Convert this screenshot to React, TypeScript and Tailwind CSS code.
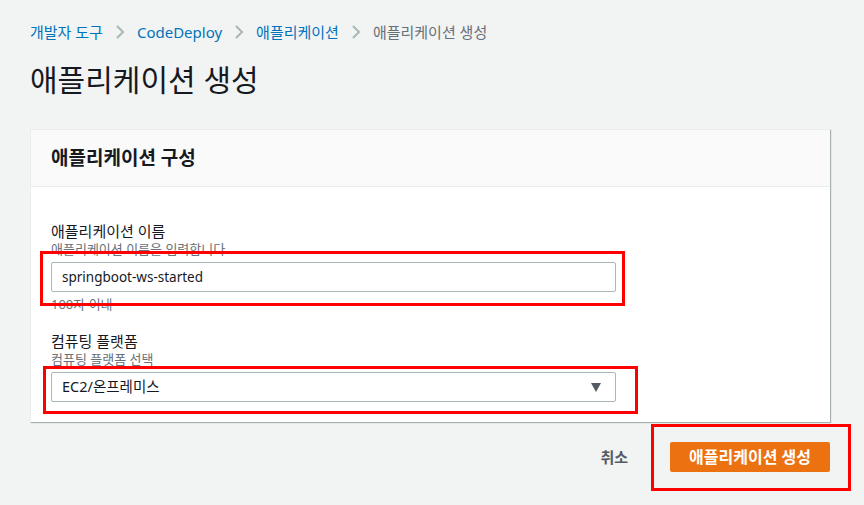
import React from "react";

const font = { fontFamily: '"Noto Sans", "Noto Sans CJK KR", sans-serif' };

function Chevron() {
  return (
    <svg width="10" height="16" viewBox="0 0 10 16" className="mx-[12px]">
      <path d="M2 2 L8 8 L2 14" fill="none" stroke="#aab7b8" strokeWidth="2" />
    </svg>
  );
}

export default function App() {
  return (
    <div
      className="relative w-[864px] h-[505px] bg-[#f2f3f3] overflow-hidden text-[#16191f]"
      style={font}
    >
      <div className="pl-[30px] pr-[34px]">
        {/* breadcrumb */}
        <div className="flex items-center h-[22px] mt-[21px] text-[15px]">
          <span className="text-[#0073bb]">개발자 도구</span>
          <Chevron />
          <span className="text-[#0073bb]">CodeDeploy</span>
          <Chevron />
          <span className="text-[#0073bb]">애플리케이션</span>
          <Chevron />
          <span className="text-[#687078]">애플리케이션 생성</span>
        </div>
        {/* title */}
        <h1 className="mt-[18px] text-[30px] leading-[38px] font-normal">애플리케이션 생성</h1>

        {/* card */}
        <div className="mt-[30px] w-[800px] bg-white border-l border-t border-[#eaeded] shadow-[1px_1px_1px_0_rgba(0,28,36,0.3)]">
          <div className="h-[57px] bg-[#fafafa] border-b border-[#eaeded] flex items-center pl-[20px]">
            <h2 className="text-[19px] font-bold leading-[24px]">애플리케이션 구성</h2>
          </div>
          <div className="px-[20px] pt-[34px] pb-[20px]">
            <div className="text-[15px] leading-[20px]">애플리케이션 이름</div>
            <div className="text-[13px] leading-[16px] text-[#687078]">애플리케이션 이름을 입력합니다</div>
            <div className="mt-[5px] w-[565px] h-[30px] border border-[#aab7b8] rounded-[2px] flex items-center px-[10px] text-[13.5px]">
              springboot-ws-started
            </div>
            <div className="mt-[4px] text-[13px] leading-[16px] text-[#687078]">100자 이내</div>

            <div className="mt-[19px] text-[15px] leading-[20px]">컴퓨팅 플랫폼</div>
            <div className="text-[13px] leading-[16px] text-[#687078]">컴퓨팅 플랫폼 선택</div>
            <div className="mt-[5px] w-[565px] h-[30px] border border-[#aab7b8] rounded-[2px] flex items-center justify-between pl-[10px] pr-[14px] text-[14.5px]">
              <span>EC2/온프레미스</span>
              <svg width="10" height="9" viewBox="0 0 10 9">
                <path d="M0 0 H10 L5 9 Z" fill="#545b64" />
              </svg>
            </div>
          </div>
        </div>

        {/* actions */}
        <div className="mt-[20px] w-[800px] flex justify-end items-center">
          <span className="text-[15px] font-bold text-[#545b64] mr-[42px]">취소</span>
          <div className="w-[160px] h-[30px] bg-[#ec7211] rounded-[2px] flex items-center justify-center text-white text-[16px] font-bold">
            애플리케이션 생성
          </div>
        </div>
      </div>

      {/* red annotation boxes */}
      <div className="absolute left-[40px] top-[251px] w-[585px] h-[55px] border-[3px] border-[#ff0000]" />
      <div className="absolute left-[43px] top-[366px] w-[595px] h-[48px] border-[3px] border-[#ff0000]" />
      <div className="absolute left-[651px] top-[424px] w-[200px] h-[67px] border-[3px] border-[#ff0000]" />
    </div>
  );
}
